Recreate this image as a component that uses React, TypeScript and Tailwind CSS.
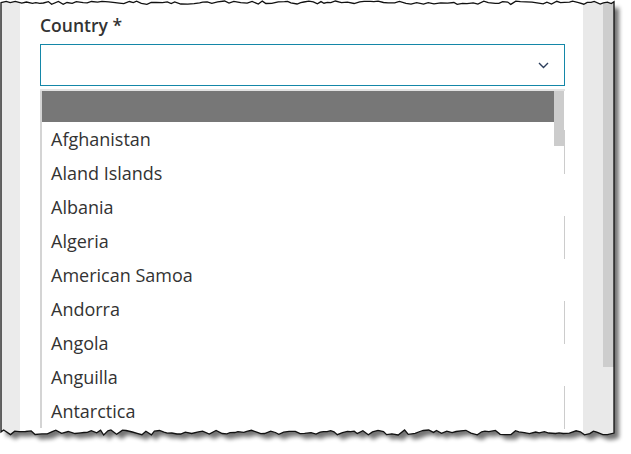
import React from "react";

// Country list shown in the open dropdown
const countries = [
  "Afghanistan",
  "Aland Islands",
  "Albania",
  "Algeria",
  "American Samoa",
  "Andorra",
  "Angola",
  "Anguilla",
  "Antarctica",
];

// Underlying input borders peeking out on the right edge of the list (y relative to list top)
const edgeSegments = [
  [39, 83],
  [125, 168],
  [210, 253],
  [295, 338],
];

// Seeded jitter so the torn edges are stable between renders
const makeRand = (seed: number) => {
  let s = seed;
  return () => {
    s = (s * 9301 + 49297) % 233280;
    return s / 233280;
  };
};

const buildOutline = () => {
  const rand = makeRand(7);
  const left = 1;
  const right = 614;
  const top: string[] = [];
  for (let x = left; x < right; x += 3 + rand() * 4) {
    top.push(`${x.toFixed(1)},${(1 + rand() * 3.5).toFixed(1)}`);
  }
  top.push(`${right},${(1 + rand() * 3).toFixed(1)}`);
  const bottom: string[] = [];
  for (let x = right; x > left; x -= 3 + rand() * 4) {
    bottom.push(`${x.toFixed(1)},${(430 + rand() * 5).toFixed(1)}`);
  }
  bottom.push(`${left},${(431 + rand() * 3).toFixed(1)}`);
  return "M" + [...top, ...bottom].join(" L") + " Z";
};

const TornFrame = () => {
  const outline = buildOutline();
  return (
    <svg
      className="pointer-events-none absolute left-0 top-0"
      width={631}
      height={454}
      viewBox="0 0 631 454"
    >
      <defs>
        <clipPath id="outside">
          <path d={`M0,0 H631 V454 H0 Z ${outline}`} clipRule="evenodd" />
        </clipPath>
        <filter id="blur" x="-5%" y="-5%" width="110%" height="110%">
          <feGaussianBlur stdDeviation="2" />
        </filter>
      </defs>
      <g clipPath="url(#outside)">
        <rect width={631} height={454} fill="#ffffff" />
        <path
          d={outline}
          transform="translate(5 5)"
          fill="#000"
          opacity={0.55}
          filter="url(#blur)"
        />
      </g>
      <path d={outline} fill="none" stroke="#111" strokeWidth={1.3} />
    </svg>
  );
};

const Chevron = () => (
  <svg width="11" height="7" viewBox="0 0 11 7">
    <polyline
      points="1,1 5.5,5.5 10,1"
      fill="none"
      stroke="#2c3e5c"
      strokeWidth="1.4"
    />
  </svg>
);

const App = () => {
  return (
    <div
      className="relative h-[454px] w-[631px] overflow-hidden bg-white"
      style={{ fontFamily: '"Open Sans", "Liberation Sans", sans-serif' }}
    >
      {/* Captured window */}
      <div className="flex h-[438px] w-[614px] overflow-hidden">
        <div className="w-[20px] bg-[#ebebeb]" />

        {/* Form panel */}
        <div className="w-[563px] bg-white pl-[20px] pt-[13px]">
          <label className="block text-[17.5px] font-semibold leading-[24px] text-[#333]">
            Country *
          </label>

          <div className="mt-[7px] flex h-[42px] w-[525px] items-center justify-end border border-[#1487a8] pr-[15px]">
            <Chevron />
          </div>

          {/* Open dropdown */}
          <div className="mt-[3px] flex w-[525px] border-t-2 border-[#e3e3e3]">
            <div className="w-[2px] bg-[#d4d4d4]" />
            <ul className="w-[512px] text-[18px] text-[#333]">
              <li className="h-[31px] bg-[#777777]" />
              {countries.map((c) => (
                <li key={c} className="flex h-[34px] items-center pl-[9px]">
                  {c}
                </li>
              ))}
            </ul>
            <div className="w-[10px]">
              <div className="h-[55px] bg-[#cccccc]" />
            </div>
            <div className="relative w-[1px]">
              {edgeSegments.map(([a, b]) => (
                <div
                  key={a}
                  className="absolute left-0 w-[1px] bg-[#cccccc]"
                  style={{ top: a, height: b - a }}
                />
              ))}
            </div>
          </div>
        </div>

        <div className="w-[20px] bg-[#e9e9e9]" />
        <div className="w-[11px] bg-[#e9e9e9]">
          <div className="h-[367px] bg-[#cdcdcd]" />
        </div>
      </div>

      <TornFrame />
    </div>
  );
};

export default App;
